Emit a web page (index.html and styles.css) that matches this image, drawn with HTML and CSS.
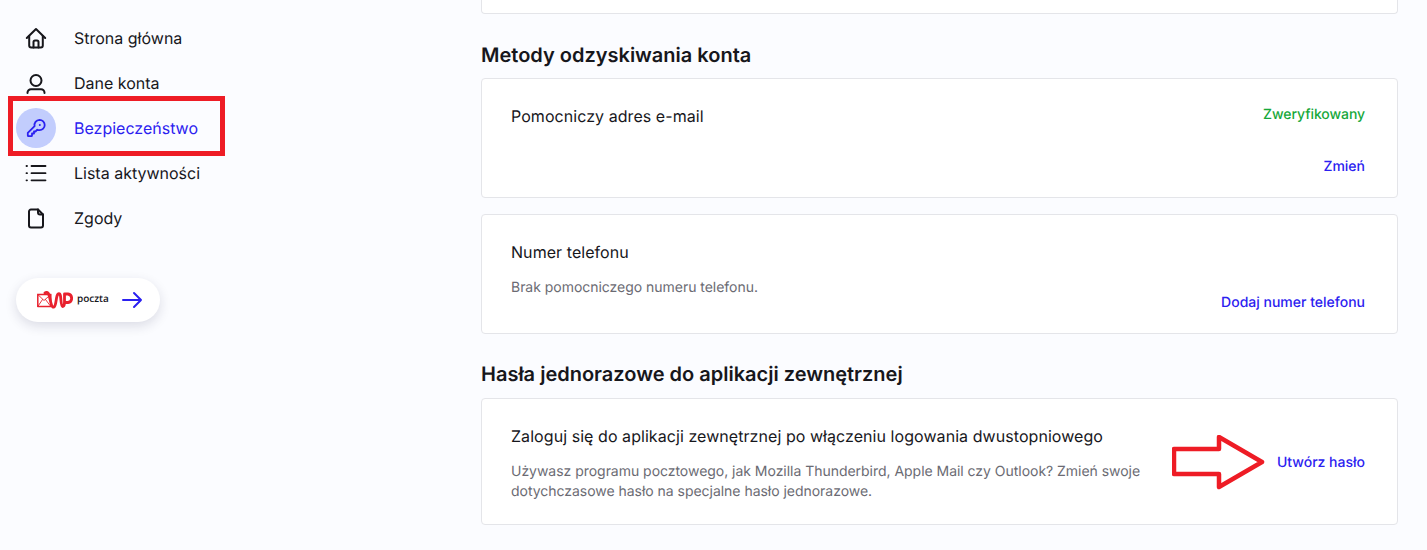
FILE: index.html
```html
<!DOCTYPE html>
<html lang="pl">
<head>
<meta charset="utf-8">
<title>Bezpieczeństwo</title>
<link rel="stylesheet" href="styles.css">
</head>
<body>
<div class="page">
  <aside class="sidebar">
    <nav class="nav">
      <a class="nav-item"><span class="nav-icon"><svg width="24" height="24" viewBox="0 0 24 24" fill="none" stroke="#17171c" stroke-width="2" stroke-linecap="round" stroke-linejoin="round"><path d="M2.800 12 12 3l9.200 9"/><path d="M5.200 10v9.500a2 2 0 0 0 2 2h9.600a2 2 0 0 0 2-2V10"/><path d="M9.500 21.500V16a1.500 1.500 0 0 1 1.500-1.500h2a1.500 1.500 0 0 1 1.500 1.500v5.500"/></svg></span><span>Strona główna</span></a>
      <a class="nav-item"><span class="nav-icon"><svg width="24" height="24" viewBox="0 0 24 24" fill="none" stroke="#17171c" stroke-width="2" stroke-linecap="round" stroke-linejoin="round"><circle cx="12" cy="9.500" r="5.500"/><path d="M3.500 22v-.200a3.500 3.500 0 0 1 3.500-3.500h10a3.500 3.500 0 0 1 3.500 3.500v.200"/></svg></span><span>Dane konta</span></a>
      <a class="nav-item active"><span class="nav-icon"><svg width="24" height="24" viewBox="0 0 24 24" fill="none" stroke="#2b21f0" stroke-width="1.800" stroke-linecap="round" stroke-linejoin="round"><path d="M15.500 3.800a5.200 5.200 0 0 1 0 10.400c-.8 0-1.500-.1-2.200-.5L11.500 15.500H10v2H8v2a.7.7 0 0 1-.7.7H4.500a.7.7 0 0 1-.7-.7v-2.700L10.600 10.200A5.200 5.200 0 0 1 15.500 3.800Z"/><circle cx="15.800" cy="9" r="1" fill="#2b21f0" stroke="none"/></svg></span><span>Bezpieczeństwo</span></a>
      <a class="nav-item"><span class="nav-icon"><svg width="24" height="24" viewBox="0 0 24 24" fill="none" stroke="#17171c" stroke-width="1.800" stroke-linecap="round"><path d="M7.500 5h14M7.500 12.200h14M7.500 19.300h14"/><path d="M2.500 5h.5M2.500 12.200h.5M2.500 19.300h.5"/></svg></span><span>Lista aktywności</span></a>
      <a class="nav-item"><span class="nav-icon"><svg width="24" height="24" viewBox="0 0 24 24" fill="none" stroke="#17171c" stroke-width="2" stroke-linecap="round" stroke-linejoin="round"><path d="M14 3.500H7a2 2 0 0 0-2 2v14a2 2 0 0 0 2 2h10a2 2 0 0 0 2-2V8.500Z"/><path d="M14 3.500v3a2 2 0 0 0 2 2h3"/></svg></span><span>Zgody</span></a>
    </nav>
    <a class="mail-btn">
      <svg class="mail-logo" width="36" height="18" viewBox="0 0 36 18" fill="none" stroke="#e8212e" stroke-linejoin="round" stroke-linecap="round">
        <path d="M.8 3.500h13v12h-13Z" stroke-width="1.500"/>
        <path d="M.8 3.500 7 9.500l6.800-6M.8 15.500 5.500 8.500M13.800 15.500 8.500 8.500" stroke-width=".9"/>
        <path d="M8 2C11 0 12 3 13 8 14 13 15 17 17 16 19 15 19 8 20 5 21 2 23 2 23.500 5 24 8 24 15.500 25.500 15.500 27 15.500 27.500 13 27.500 11V3H31A4.300 4.300 0 0 1 31 11.500H28.500" stroke-width="2.800"/>
      </svg>
      <span class="mail-word">poczta</span>
      <svg class="mail-arrow" width="22" height="18" viewBox="0 0 22 18" fill="none" stroke="#2b21f0" stroke-width="2" stroke-linecap="round" stroke-linejoin="round"><path d="M2 9h18M13 2l7 7-7 7"/></svg>
    </a>
  </aside>
  <main class="content">
    <div class="card card-stub"></div>
    <h2 class="section-title">Metody odzyskiwania konta</h2>
    <section class="card card-row">
      <div class="card-main"><h3 class="card-title">Pomocniczy adres e-mail</h3></div>
      <div class="card-side">
        <span class="status">Zweryfikowany</span>
        <a class="action">Zmień</a>
      </div>
    </section>
    <section class="card card-row card-phone">
      <div class="card-main">
        <h3 class="card-title">Numer telefonu</h3>
        <p class="card-text">Brak pomocniczego numeru telefonu.</p>
      </div>
      <div class="card-side side-end"><a class="action">Dodaj numer telefonu</a></div>
    </section>
    <h2 class="section-title title-second">Hasła jednorazowe do aplikacji zewnętrznej</h2>
    <section class="card card-row card-otp">
      <div class="card-main">
        <h3 class="card-title">Zaloguj się do aplikacji zewnętrznej po włączeniu logowania dwustopniowego</h3>
        <p class="card-text">Używasz programu pocztowego, jak Mozilla Thunderbird, Apple Mail czy Outlook? Zmień swoje dotychczasowe hasło na specjalne hasło jednorazowe.</p>
      </div>
      <div class="card-side side-center"><a class="action">Utwórz hasło</a></div>
    </section>
  </main>
</div>
<div class="mark-box"></div>
<svg class="mark-arrow" width="98" height="60" viewBox="0 0 98 60" fill="none" stroke="#ee1c25" stroke-width="4.500" stroke-linejoin="round"><path d="M2 14H47V2L90 27 47 52V39H2Z"/></svg>
</body>
</html>
```
FILE: styles.css
```css
* { box-sizing: border-box; }
html, body { margin: 0; height: 550px; overflow: hidden; }
body {
  background: #fbfcff;
  font-family: Inter, "Liberation Sans", sans-serif;
  color: #17171c;
  text-rendering: geometricPrecision;
}
.page { display: flex; height: 550px; }
.sidebar { width: 481px; flex: none; padding: 18px 0 0 16px; }
.nav { display: flex; flex-direction: column; gap: 5px; }
.nav-item {
  display: flex; align-items: center; gap: 18px;
  height: 40px; font-size: 16px; line-height: 24px; color: #17171c;
}
.nav-icon {
  width: 40px; height: 40px; flex: none; border-radius: 50%;
  display: flex; align-items: center; justify-content: center;
}
.active { color: #2b21f0; }
.active .nav-icon { background: #c2cdfd; }
.mail-btn {
  display: flex; align-items: center;
  width: 144px; height: 44px; margin-top: 40px; padding-left: 21px;
  background: #fff; border-radius: 22px;
  box-shadow: 0 4px 12px rgba(30, 30, 70, .14);
}
.mail-logo { flex: none; }
.mail-word { font-family: "Open Sans", sans-serif; font-size: 10px; font-weight: 600; width: 31px; margin-left: 4px; margin-top: -4px; }
.mail-arrow { flex: none; margin-left: 13px; }
.content { width: 917px; flex: none; }
.card {
  background: #fff; border: 1px solid #e4e5e9; border-radius: 4px;
}
.card-stub { height: 14px; border-top: 0; border-radius: 0 0 4px 4px; }
.section-title {
  margin: 29px 0 11px; font-size: 20px; line-height: 24px; font-weight: 600; color: #17171c;
}
.title-second { margin-top: 28px; margin-bottom: 12px; }
.card-row { display: flex; justify-content: space-between; padding: 25px 32px 20px 29px; }
.card-row:not(.card-otp) { height: 120px; }
.card-phone { margin-top: 16px; }
.card-otp { height: 127px; padding-bottom: 24px; }
.card-main { width: 640px; }
.card-title { margin: 0; font-size: 16px; line-height: 24px; font-weight: 400; letter-spacing: .06px; color: #17171c; }
.card-text { margin: 14px 0 0; font-size: 14px; line-height: 20px; letter-spacing: -.03px; color: #6b6b73; }
.card-side { display: flex; flex-direction: column; justify-content: space-between; align-items: flex-end; padding-top: 1px; font-size: 14px; line-height: 20px; font-weight: 500; }
.side-end { justify-content: flex-end; }
.side-center { justify-content: center; }
.status { color: #16a83a; letter-spacing: -.07px; }
.action { color: #2b21f0; }
.mark-box {
  position: absolute; left: 8px; top: 96px; width: 217px; height: 60px;
  border: 5px solid #ee1c25;
}
.mark-arrow { position: absolute; left: 1172px; top: 435px; }
```
